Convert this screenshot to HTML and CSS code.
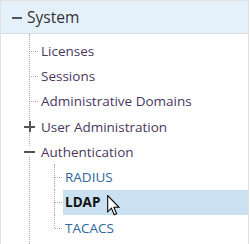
FILE: index.html
```html
<!DOCTYPE html>
<html lang="en">
<head>
    <meta charset="UTF-8">
    <title>Tree</title>
    <link rel="stylesheet" href="styles.css">
</head>
<body>
    <div class="tree">
        <div class="tree-head">
            <span class="toggle minus"></span>
            <span class="head-label">System</span>
        </div>
        <ul class="level-1">
            <li><div class="row"><span class="link">Licenses</span></div></li>
            <li><div class="row"><span class="link">Sessions</span></div></li>
            <li><div class="row"><span class="link">Administrative Domains</span></div></li>
            <li><div class="row folder"><span class="toggle plus"></span><span class="link">User Administration</span></div></li>
            <li>
                <div class="row folder"><span class="toggle minus"></span><span class="link">Authentication</span></div>
                <ul class="level-2">
                    <li><div class="row"><span class="link">RADIUS</span></div></li>
                    <li class="selected">
                        <div class="row"><span class="link">LDAP</span></div>
                        <svg class="cursor" width="14" height="21" viewBox="0 0 13 20">
                            <path d="M0.5 0.5 L0.5 16 L4 12.5 L6.7 18.8 L9 17.8 L6.4 11.7 L11.3 11.7 Z" fill="#fff" stroke="#000" stroke-width="1"/>
                        </svg>
                    </li>
                    <li><div class="row"><span class="link">TACACS</span></div></li>
                </ul>
            </li>
        </ul>
    </div>
</body>
</html>
```

FILE: styles.css
```css
body {
    margin: 0;
    background: #fff;
    font-family: "Open Sans", "Noto Sans", sans-serif;
    font-size: 13.5px;
}

.tree {
    width: 247px;
    height: 243px;
    border: 1px solid #e2e2e2;
    border-bottom: none;
    overflow: hidden;
}

.tree-head {
    height: 32px;
    background: #e5f1fa;
    border-bottom: 1px solid #d9dfe3;
    display: flex;
    align-items: center;
    padding-left: 11px;
    color: #333;
    font-size: 15.5px;
}

.head-label {
    margin-left: 5px;
}

ul {
    list-style: none;
    margin: 0;
    padding: 0;
}

.level-1 {
    margin-left: 28px;
    padding-top: 4px;
    padding-bottom: 40px;
    border-left: 1px dotted #a8a8a8;
}

.row {
    position: relative;
    height: 25.3px;
    display: flex;
    align-items: center;
}

.level-1 > li > .row {
    padding-left: 11px;
}

.level-1 > li > .row::before {
    content: "";
    position: absolute;
    left: 1px;
    top: 50%;
    width: 7px;
    border-top: 1px dotted #a8a8a8;
}

.level-1 > li > .folder::before {
    display: none;
}

.link {
    color: #4a3760;
}

.toggle {
    position: relative;
    display: inline-block;
    width: 11px;
    height: 11px;
}

.toggle::before,
.toggle::after {
    content: "";
    position: absolute;
    background: #555;
}

.toggle::before {
    left: 0;
    right: 0;
    top: 5px;
    height: 2px;
}

.plus::after {
    top: 0;
    bottom: 0;
    left: 5px;
    width: 2px;
}

.tree-head .toggle {
    width: 10px;
}

.level-1 .toggle {
    position: absolute;
    left: -6px;
    top: 7px;
    background: #fff;
}

.level-2 {
    margin-left: 24px;
}

.level-2 > li {
    position: relative;
}

.level-2 > li::before {
    content: "";
    position: absolute;
    left: 0;
    top: 0;
    bottom: 0;
    border-left: 1px dotted #a8a8a8;
}

.level-2 > li:last-child::before {
    bottom: 50%;
}

.level-2 > li > .row {
    margin-left: 9px;
    padding-left: 2px;
}

.level-2 > li > .row::before {
    content: "";
    position: absolute;
    left: -8px;
    top: 50%;
    width: 7px;
    border-top: 1px dotted #a8a8a8;
}

.level-2 .link {
    color: #2d679c;
}

.selected > .row {
    background: #c9e1f1;
}

.selected .link {
    color: #111;
    font-weight: bold;
}

.cursor {
    position: absolute;
    left: 53px;
    top: 5px;
}
```
